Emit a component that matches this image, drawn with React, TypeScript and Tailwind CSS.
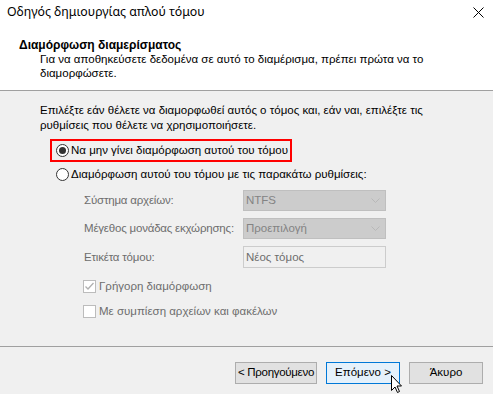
import React from 'react';

const font = { fontFamily: '"Liberation Sans", Arial, sans-serif' };

const Radio = ({ checked }: { checked?: boolean }) => (
    <span className="w-[13px] h-[13px] rounded-full border border-[#333333] bg-white flex items-center justify-center shrink-0">
        {checked && <span className="w-[7px] h-[7px] rounded-full bg-[#333333]" />}
    </span>
);

const Checkbox = ({ checked }: { checked?: boolean }) => (
    <span className="w-[13px] h-[13px] border border-[#bcbcbc] bg-white flex items-center justify-center shrink-0">
        {checked && (
            <svg width="11" height="11" viewBox="0 0 11 11">
                <path d="M1.5 5.5 L4 8 L9.5 2" fill="none" stroke="#b0b0b0" strokeWidth="1.3" />
            </svg>
        )}
    </span>
);

const DisabledSelect = ({ value }: { value: string }) => (
    <div className="w-[143px] h-[21px] bg-[#cccccc] border border-[#bfbfbf] flex items-center justify-between pl-[2px] pr-[5px] text-[#838383]">
        <span>{value}</span>
        <svg width="9" height="6" viewBox="0 0 9 6">
            <path d="M0.5 0.5 L4.5 4.5 L8.5 0.5" fill="none" stroke="#b8b8b8" strokeWidth="1" />
        </svg>
    </div>
);

const FormRow = ({ label, children }: { label: string; children: React.ReactNode }) => (
    <div className="flex items-center">
        <span className="w-[159px] text-[#6d6d6d] whitespace-nowrap tracking-[-0.2px]">{label}</span>
        {children}
    </div>
);

const App: React.FC = () => {
    return (
        <div className="relative w-[493px] h-[394px] bg-[#f0f0f0] flex flex-col text-[11.5px] text-black overflow-hidden" style={font}>
            {/* Title bar */}
            <div className="h-[25px] bg-white flex items-center justify-between pl-[7px] pr-[9px]">
                <span className="text-[12.3px]" style={{ fontFamily: '"Noto Sans", "Open Sans", sans-serif' }}>Οδηγός δημιουργίας απλού τόμου</span>
                <svg width="11" height="11" viewBox="0 0 11 11">
                    <path d="M0.5 0.5 L10.5 10.5 M10.5 0.5 L0.5 10.5" stroke="#000" strokeWidth="1" />
                </svg>
            </div>

            {/* Header */}
            <div className="h-[66px] bg-white border-b border-[#a0a0a0] pt-[13px] pl-[19px] leading-[14px]">
                <div className="font-bold text-[12px]">Διαμόρφωση διαμερίσματος</div>
                <div className="pl-[21px]">
                    Για να αποθηκεύσετε δεδομένα σε αυτό το διαμέρισμα, πρέπει πρώτα να το<br />
                    διαμορφώσετε.
                </div>
            </div>

            {/* Body */}
            <div className="flex-1 flex flex-col pl-[40px] pt-[12px] leading-[15px]">
                <div>
                    Επιλέξτε εάν θέλετε να διαμορφωθεί αυτός ο τόμος και, εάν ναι, επιλέξτε τις<br />
                    ρυθμίσεις που θέλετε να χρησιμοποιήσετε.
                </div>

                <div className="mt-[6px] ml-[10px] w-[242px] h-[23px] border-2 border-[#ff0000] flex items-center gap-[2px] pl-[4px]">
                    <Radio checked />
                    <span className="whitespace-nowrap">Να μην γίνει διαμόρφωση αυτού του τόμου</span>
                </div>

                <div className="mt-[5px] ml-[16px] flex items-center gap-[2px]">
                    <Radio />
                    <span className="whitespace-nowrap">Διαμόρφωση αυτού του τόμου με τις παρακάτω ρυθμίσεις:</span>
                </div>

                <div className="mt-[8px] ml-[44px] flex flex-col gap-[7px]">
                    <FormRow label="Σύστημα αρχείων:">
                        <DisabledSelect value="NTFS" />
                    </FormRow>
                    <FormRow label="Μέγεθος μονάδας εκχώρησης:">
                        <DisabledSelect value="Προεπιλογή" />
                    </FormRow>
                    <FormRow label="Ετικέτα τόμου:">
                        <div className="w-[143px] h-[22px] bg-[#f0f0f0] border border-[#cccccc] flex items-center pl-[2px] text-[#6d6d6d]">
                            Νέος τόμος
                        </div>
                    </FormRow>
                </div>

                <div className="mt-[11px] ml-[43px] flex flex-col gap-[10px] text-[#6d6d6d]">
                    <div className="flex items-center gap-[3px]">
                        <Checkbox checked />
                        <span>Γρήγορη διαμόρφωση</span>
                    </div>
                    <div className="flex items-center gap-[3px]">
                        <Checkbox />
                        <span>Με συμπίεση αρχείων και φακέλων</span>
                    </div>
                </div>
            </div>

            {/* Footer */}
            <div className="h-[48px] border-t border-[#a0a0a0] flex items-start justify-end gap-[9px] pt-[15px] pr-[10px]">
                <button className="w-[82px] h-[22px] bg-[#e1e1e1] border border-[#adadad] whitespace-nowrap tracking-[-0.3px]">&lt; Προηγούμενο</button>
                <button className="w-[74px] h-[22px] bg-[#e5f1fb] border border-[#0078d7]">Επόμενο &gt;</button>
                <button className="w-[74px] h-[22px] bg-[#e1e1e1] border border-[#adadad]">Άκυρο</button>
            </div>

            {/* Mouse cursor */}
            <svg className="absolute left-[391px] top-[375px]" width="12" height="19" viewBox="0 0 12 19">
                <path d="M0.5 0.5 L0.5 15.5 L4 12 L6.5 17.5 L8.5 16.5 L6 11 L10.5 11 Z" fill="#fff" stroke="#000" strokeWidth="1" strokeLinejoin="miter" />
            </svg>
        </div>
    );
};

export default App;
